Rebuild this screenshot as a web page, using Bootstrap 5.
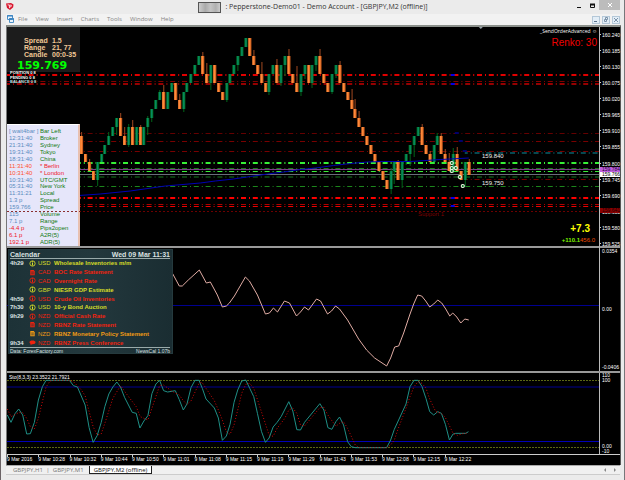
<!DOCTYPE html>
<html lang="en">

<head>
    <meta charset="utf-8">
    <meta name="viewport" content="width=device-width, initial-scale=1">
    <title>Pepperstone-Demo01 - Demo Account</title>
    <link href="https://cdn.jsdelivr.net/npm/bootstrap@5.3.1/dist/css/bootstrap.min.css" rel="stylesheet">
    <style>
        body { font-family: "Liberation Sans", Arial, sans-serif; font-size: 6px; line-height: 7px; background: #ebebeb; color: #333; }
        button { border: 0; padding: 0; background: none; font-size: inherit; line-height: inherit; color: inherit; }
        svg { display: block; }
        .win { min-height: 100vh; border-left: 1px solid #6b6366; border-right: 1px solid #77777a; padding: 0 4px 0 5px; }

        .title-row { height: 14px; font: 7px/14px "Open Sans", "Noto Sans", sans-serif; color: #333; }
        .title-side { width: 48px; }
        .acct-box { width: 23px; height: 11px; border: 1px solid #555; background: linear-gradient(90deg, #ccc, #aaa 30%, #c4c4c4 55%, #b0b0b0 80%, #ccc); }
        .close-btn { width: 21px; height: 10px; background: #bcbcbc; }

        .menu-row { height: 11px; background: #f2f2f2; font: 6px/11px "Open Sans", "Noto Sans", sans-serif; }
        .menu-row a { color: #858585; text-decoration: none; }
        .menu-links { gap: 8px; }
        .mdi-btns { gap: 2px; }
        .mdi-btn { width: 8px; height: 8px; border: 1px solid #b4c8d8; background: #e3eef7; }

        .chart { border-left: 1px solid #777; border-top: 2px solid #8b908b; background: #000; color: #fff; border-right: 1px solid #555; margin-right: -1px; }
        .pane { display: grid; grid-template-columns: minmax(0, 1fr) 21px; border-bottom: 2px solid #999; }
        .plot { position: relative; min-width: 0; }
        .plot svg.graph { width: 100%; }
        .pane-price .graph { height: 219px; }
        .pane-osc .graph { height: 123px; }
        .pane-sto { border-bottom: 1px solid #ccc; }
        .pane-sto .graph { height: 81px; }
        .graph polyline, .graph line { fill: none; vector-effect: non-scaling-stroke; }
        .axis { position: relative; border-left: 1px solid #bbb; font: 5px/7px "Liberation Sans Narrow", "Liberation Sans", sans-serif; padding: 0 0 0 2px; white-space: nowrap; }
        .axis-price { padding-top: 5px; margin-bottom: -2px; }
        .axis-price > span::before { content: ""; display: inline-block; width: 1px; height: 1px; margin: 0 1px 2px -2px; background: #ccc; }
        .price-tag { position: absolute; left: 0; right: 0; padding-left: 2px; height: 5px; line-height: 5px; }
        .pane-sto .axis { line-height: 5px; }
        .tag-ask { top: 140px; background: #c060e0; color: #200030; }
        .tag-bid { top: 145px; background: #fff; color: #000; }
        .tag-stop { top: 181px; background: #8b0000; color: #200; }
        .times { height: 10px; width: calc(100% - 21px); font: 5px/9px "Liberation Sans Narrow", "Liberation Sans", sans-serif; }
        .times span { flex: 0 0 5.28%; white-space: nowrap; background: linear-gradient(#ccc, #ccc) 0 0 / 1px 2px no-repeat; }

        .over { position: absolute; white-space: nowrap; }
        .info-box { left: 0; top: 0; width: 73px; height: 45px; background: #1c1c1c; color: #f2c896; padding: 10px 0 0 17px; font-weight: bold; font-size: 7px; }
        .info-box dl { display: grid; grid-template-columns: 28px 1fr; margin: 0; }
        .info-box dt, .info-box dd { margin: 0; line-height: 7px; font-weight: bold; }
        .big-price { font: bold 11px/16px "DejaVu Sans", sans-serif; color: #0f0; margin-left: -7px; }
        .stamp { left: 3px; font: bold 4px/4px "Liberation Sans", sans-serif; color: #fff; }
        .stamp-a { top: 44px; }
        .stamp-b { top: 49px; }
        .stamp-c { top: 53px; color: #bfe3e6; }
        .clock-box { left: 0; top: 97px; width: 73px; height: 122px; background: #e6e6fa; border-top: 1px solid #fff; border-right: 2px solid #e8c0b0; padding: 3px 0 0 2px; color: #5a8cc0; }
        .clock-box table { height: 117px; width: 100%; line-height: 6px; }
        .clock-box td { padding: 0; }
        .clock-box td:first-child { width: 31px; }
        .clock-box td:last-child { color: #107a10; }
        .clock-box tr.open td, .clock-box tr.neg td:first-child { color: #f01428; }
        .clock-box tr.open td:first-child { color: #ff5030; }
        .stop-line { left: 0; width: 73px; height: 1px; top: 184px; background: repeating-linear-gradient(90deg, #8b3030 0 2px, transparent 2px 4px); }
        .cal-box { left: 1px; top: 1px; width: 165px; height: 105px; background: linear-gradient(90deg, #1d3237, #23383d 50%, #1a2d32); border: 1px solid #253a3e; padding: 1px 2px 0 1px; font-weight: bold; color: #d9e0e0; }
        .cal-head { font-size: 7px; height: 8px; border-bottom: 1px solid #9aa; }
        .cal-box table { width: 100%; height: 88px; line-height: 8px; }
        .cal-box td { padding: 0; }
        .cal-box td:nth-child(1) { width: 19px; }
        .cal-box td:nth-child(2) { width: 9px; }
        .cal-box td:nth-child(3) { width: 16px; font-weight: normal; }
        .cal-box svg { width: 7px; height: 7px; }
        .cal-box .low { color: #d6dc28; }
        .cal-box .high { color: #f0230f; }
        .cal-box .mid { color: #f09a14; }
        .cal-box tr td:first-child { color: #d9e0e0; }
        .cal-foot { border-top: 1px solid #9aa; font-size: 5px; line-height: 6px; font-weight: normal; }
        .expert { right: 2px; top: 1px; font-family: "Open Sans", sans-serif; font-size: 5px; }
        .renko { right: 2px; top: 10px; font-size: 10px; line-height: 12px; color: #f00000; }
        .lvl { left: 475px; font-size: 6px; color: #eee; }
        .lvl-a { top: 126px; }
        .lvl-b { top: 153px; }
        .support { left: 411px; top: 184px; color: #7c0000; }
        .gain { right: 9px; top: 196px; font: bold 10px/12px "Liberation Sans", sans-serif; color: #ff0; }
        .pips { right: 4px; top: 210px; }
        .pips b { color: #7cf000; }
        .pips span { color: #f04a00; }
        .sto-name { left: 2px; top: 1px; font: 5px/7px "Liberation Sans", sans-serif; }

        .tab-row { height: 10px; background: #f0f0f0; border-top: 1px solid #aaa; border-bottom: 1px solid #ccc; color: #777; padding-left: 7px; font: 6px/8px "Open Sans", "Noto Sans", sans-serif; }
        .tab-row .tab-sep { width: 10px; text-align: center; }
        .tab-row .tab-on { background: #fff; color: #111; border: 1px solid #222; border-top: 0; padding: 0 4px; margin-left: 5px; }
    </style>
</head>

<body>
    <div class="win d-flex flex-column">
        <header class="title-row d-flex justify-content-between">
            <div class="title-side">
                <svg width="8" height="14" viewBox="0 0 8 14">
                    <path d="M0 3.6 5 3l2.5 1.5-.3 2.8L4 10 1 8z" fill="#d8142c" />
                    <path d="M1.6 4.8l1.7.2.2 3.2M3.3 5.2l2-.1-.2 1.6-1.5.3" fill="none" stroke="#fff" stroke-width=".8" />
                </svg>
            </div>
            <div class="d-flex align-items-center">
                <span class="acct-box me-1"></span>
                <span>: Pepperstone-Demo01 - Demo Account - [GBPJPY,M2 (offline)]</span>
            </div>
            <div class="title-side d-flex justify-content-end">
                <button aria-label="Minimize"><svg width="11" height="12"><path d="M0 6.5h4" stroke="#111" stroke-width="1" /></svg></button>
                <button aria-label="Maximize"><svg width="11" height="12"><path d="M2.5 3.5h4v3h-4z" fill="none" stroke="#111" /><path d="M2 3.5h5" stroke="#111" stroke-width="2" /></svg></button>
                <button class="close-btn d-flex justify-content-center align-items-center" aria-label="Close"><svg width="4" height="4"><path d="M0 0l4 4M4 0L0 4" stroke="#fff" /></svg></button>
            </div>
        </header>

        <nav class="menu-row d-flex align-items-center">
            <svg width="12" height="9" viewBox="0 0 12 9"><path d="M1.5.5h5v4h-5zM3.5 3.5h4v4h-4z" fill="#e9f3fb" stroke="#4b8ec4" /><path d="M1 1h6M3 4h5" stroke="#2f7cc0" /></svg>
            <div class="menu-links d-flex">
                <a href="#">File</a><a href="#">View</a><a href="#">Insert</a><a href="#">Charts</a><a href="#">Tools</a><a href="#">Window</a><a href="#">Help</a>
            </div>
            <div class="mdi-btns d-flex ms-auto">
                <button class="mdi-btn" aria-label="Minimize chart"><svg width="6" height="6"><path d="M1 4.5h3" stroke="#57718a" /></svg></button>
                <button class="mdi-btn" aria-label="Restore chart"><svg width="6" height="6"><path d="M2.5.5h2v2h-2zM1.5 2.5h2v2h-2z" fill="none" stroke="#7c93a8" /></svg></button>
                <button class="mdi-btn" aria-label="Close chart"><svg width="6" height="6"><path d="M1 1l4 4M5 1L1 5" stroke="#7c93a8" /></svg></button>
            </div>
        </nav>

        <main class="chart">
            <section class="pane pane-price">
                <div class="plot">
                    <svg class="graph" id="priceGraph" viewBox="7 27 591 219" preserveAspectRatio="none"></svg>
                    <div class="over info-box">
                        <dl>
                            <dt>Spread</dt><dd>1.5</dd>
                            <dt>Range</dt><dd>21, 77</dd>
                            <dt>Candle</dt><dd>00:0-35</dd>
                        </dl>
                        <div class="big-price">159.769</div>
                    </div>
                    <span class="over stamp stamp-a">POSITION 0 8</span>
                    <span class="over stamp stamp-b">PENDING 0 8</span>
                    <span class="over stamp stamp-c">BALANCE 0 8</span>
                    <div class="over clock-box">
                        <table>
                            <tr><td>[ wait4bar ]</td><td>Bar Left</td></tr>
                            <tr><td>12:31:40</td><td>Broker</td></tr>
                            <tr><td>21:31:40</td><td>Sydney</td></tr>
                            <tr><td>19:31:40</td><td>Tokyo</td></tr>
                            <tr><td>18:31:40</td><td>China</td></tr>
                            <tr class="open"><td>11:31:40</td><td>* Berlin</td></tr>
                            <tr class="open"><td>10:31:40</td><td>* London</td></tr>
                            <tr><td>10:31:40</td><td>UTC/GMT</td></tr>
                            <tr><td>05:31:40</td><td>New York</td></tr>
                            <tr><td>11:31:21</td><td>Local</td></tr>
                            <tr><td>1.3 p</td><td>Spread</td></tr>
                            <tr><td>159.766</td><td>Price</td></tr>
                            <tr><td>115</td><td>Volume</td></tr>
                            <tr><td>7.1 p</td><td>Range</td></tr>
                            <tr class="neg"><td>-4.4 p</td><td>Pips2open</td></tr>
                            <tr class="neg"><td>6.1 p</td><td>A2R(5)</td></tr>
                            <tr class="neg"><td>192.1 p</td><td>ADR(5)</td></tr>
                        </table>
                    </div>
                    <div class="over stop-line"></div>
                    <span class="over expert">_SendOrderAdvanced ☺</span>
                    <span class="over renko">Renko: 30</span>
                    <span class="over lvl lvl-a">159.840</span>
                    <span class="over lvl lvl-b">159.750</span>
                    <span class="over support">Support 1</span>
                    <span class="over gain">+7.3</span>
                    <span class="over pips"><b>+110.1</b><span>456.0</span></span>
                </div>
                <div class="axis axis-price d-flex flex-column justify-content-between">
                    <span>160.240</span><span>160.185</span><span>160.130</span><span>160.075</span><span>160.020</span><span>159.965</span><span>159.910</span>
                    <span>159.855</span><span>159.800</span><span>159.745</span><span>159.690</span><span>159.635</span><span>159.580</span><span>159.525</span>
                    <div class="price-tag tag-ask">159.784</div>
                    <div class="price-tag tag-bid">159.766</div>
                    <div class="price-tag tag-stop">159.641</div>
                </div>
            </section>

            <section class="pane pane-osc">
                <div class="plot">
                    <svg class="graph" viewBox="7 248 591 123" preserveAspectRatio="none">
                        <line x1="7" y1="305.5" x2="598" y2="305.5" stroke="#000090" />
                        <polyline stroke="#e0aca4" points="172,273 179,286 182,286 188,280 199,270 206,283 210,282 217,295 222,307 226,306 229,303 234,296 245,277 249,281 257,295 265,314 269,313 273,308 277,312 284,301 289,303 296,316 300,312 304,307 308,310 316,299 320,301 327,314 331,311 335,306 339,309 347,320 358,339 366,350 374,358 386,366 390,358 394,347 398,346 403,333 409,315 413,304 417,295 421,296 425,301 429,307 433,304 437,300 441,303 445,309 449,316 452,313 456,317 460,323 464,319 468,320" />
                    </svg>
                    <div class="over cal-box">
                        <div class="cal-head d-flex justify-content-between"><span>Calendar</span><span>Wed 09 Mar 11:31</span></div>
                        <table id="newsTable"></table>
                        <div class="cal-foot d-flex justify-content-between"><span>Data: ForexFactory.com</span><span>NewsCal 1.07b</span></div>
                    </div>
                </div>
                <div class="axis d-flex flex-column justify-content-between">
                    <span>0.0354</span><span>0.00</span><span>-0.0406</span>
                </div>
            </section>

            <section class="pane pane-sto">
                <div class="plot">
                    <!-- three units to a pixel -->
                    <svg class="graph" viewBox="21 24 1773 243" preserveAspectRatio="none">
                        <g stroke="#5c6814" stroke-dasharray="2 1">
                            <line x1="21" y1="46.5" x2="1794" y2="46.5" />
                            <line x1="21" y1="247.5" x2="1794" y2="247.5" />
                        </g>
                        <line x1="21" y1="66" x2="1794" y2="66" stroke="#000090" />
                        <line x1="21" y1="229.5" x2="1794" y2="229.5" stroke="#0000b8" />
                        <polyline stroke="#1f8f86" points="22,150 33,172 45,146 56,132 68,150 80,207 91,206 103,172 115,105 127,65 138,46 208,46 220,62 232,66 255,120 267,188 279,232 291,212 303,173 314,125 326,87 338,66 350,51 361,66 373,97 396,142 408,145 419,189 431,168 443,152 455,86 467,57 478,46 490,77 502,81 525,77 537,104 549,135 560,117 572,68 584,46 596,46 606,70 617,102 642,129 654,159 666,226 678,213 689,178 701,112 712,75 724,48 736,45 748,70 760,95 771,145 783,199 795,232 806,219 818,186 830,172 842,155 865,110 877,138 889,194 900,195 912,172 958,116 970,135 982,188 994,193 1006,170 1017,156 1029,180 1041,230 1052,245 1064,248 1158,248 1170,225 1181,193 1216,117 1228,65 1240,46 1252,46 1264,65 1276,101 1287,140 1299,150 1311,140 1322,145 1334,178 1346,225 1357,207 1365,205 1395,205 1403,200" />
                        <polyline stroke="#d00808" stroke-dasharray="1 2" points="22,132 33,155 56,143 68,143 80,160 91,185 103,192 115,160 127,110 138,66 150,48 162,46 208,46 220,50 243,74 255,92 267,140 279,185 291,210 303,207 314,175 338,100 361,62 385,95 408,125 420,155 443,165 455,130 478,62 490,60 514,78 537,90 549,107 560,118 572,108 596,55 605,52 617,70 642,107 654,135 666,165 678,200 689,208 701,180 712,135 724,85 736,58 748,55 760,70 783,140 806,210 818,214 830,190 853,160 865,135 877,129 889,145 900,180 912,183 958,128 970,127 982,150 1006,184 1017,175 1029,170 1041,190 1064,240 1075,248 1158,248 1170,240 1181,225 1193,190 1216,130 1228,95 1240,65 1252,50 1264,55 1276,70 1287,102 1305,140 1322,145 1334,158 1346,182 1357,205 1370,211 1385,206 1403,204" />
                    </svg>
                    <span class="over sto-name">Sto(8,3,3) 23.3522 21.7921</span>
                </div>
                <div class="axis d-flex flex-column justify-content-between">
                    <div class="d-flex flex-column"><span>110</span><span>100</span></div>
                    <div class="d-flex flex-column"><span>0.00</span><span>-10</span></div>
                </div>
            </section>

            <div class="times d-flex" id="timeAxis"></div>
        </main>

        <footer class="tab-row d-flex align-items-stretch">
            <button>GBPJPY,H1</button>
            <span class="tab-sep">|</span>
            <button>GBPJPY,M1</button>
            <button class="tab-on">GBPJPY,M2 (offline)</button>
            <div class="ms-auto d-flex">
                <button aria-label="Scroll left"><svg width="9" height="8"><path d="M4 2v4L2 4z" fill="#888" /></svg></button>
                <button aria-label="Scroll right"><svg width="9" height="8"><path d="M3 2v4l2-2z" fill="#888" /></svg></button>
            </div>
        </footer>
    </div>

    <script src="https://cdn.jsdelivr.net/npm/bootstrap@5.3.1/dist/js/bootstrap.bundle.min.js"></script>
    <script>
        const LEFT = 7, RIGHT = 598;

        // y, colour, thickness, first x
        const levels = [
            [75, '#e00000', 2], [81.5, '#800000', 1], [84, '#960000', 2],
            [133.5, '#640000', 1], [141.5, '#780000', 1], [151.5, '#780000', 1],
            [153, '#064850', 2, 464], [163, '#37f037', 2], [168.5, '#1c7c1c', 1],
            [171.5, '#37f037', 1], [177, '#0c3c10', 2], [179.5, '#780000', 1, 464],
            [186.5, '#1c861c', 1], [198, '#ff0000', 2], [204.5, '#b00000', 1], [206.5, '#f00000', 1]
        ];

        // direction, top level, height in bricks, wick above, wick below
        const candles = `o11.2,4 o13.1 o14.1,3 o15.1 g14.2,0,6 g13.1 g12.1 g11.1,4 g10.1 g9.1,0,8 o9.2,5 o11.1,9
            g10.2,3,2 o10.2,7 g10.2 o10.2,2 g10.2 g9.1,2,8 g8.1,0,4 g7.1 g6.1,2 o6.2,7 g6.2 g5.1 o5.2 o7.1,6
            g6.2,0,3 g5.1 g4.1 g3.1 g2.1 o2.2,4 o4.1,11 g3.2,0,7 o3.2 o5.1 o6.1 g5.2,0,2 g4.1 g3.1 g2.1,0,6 g1.1
            g0.1 o0.2 o2.1,6 o3.1 o4.1,12 o5.1 g4.2,0,3 g3.1 o3.2,6 g3.2,0,3 g2.1,0,11 o2.2,7 o4.1 o5.1,17 g4.2,0,4
            g3.1,0,5 o3.2 g3.2,0,5 g2.1,0,6 o2.2,7 o4.1 o5.1 g4.2,0,2 g3.1,0,4 o3.2,4 o5.1 o6.1 o7.1,11 o8.1,10
            o9.1,7 o10.1 o11.1 o12.1 o13.1 o14.1 o15.1 o16.1 g15.2,2,5 g14.1,0,13 o14.2,2 g14.2,0,8 g13.1,0,3
            g12.1,0,12 g11.1,0,12 g10.1 o10.2,3 o12.1 o13.1,3 g12.2 g11.1,3 o11.2,3 o13.1,5 o14.1,9 g13.2,6,2
            o13.2,7 o15.1 g14.2,0,7 o14.2,3`.trim().split(/\s+/);

        const maPoints = '79,195.5 100,194 130,191 165,186 200,183 215,181 233,179 250,176.5 267,174 283,172 300,169.5 315,168 333,165.5 350,163.5 367,162 383,161.5 410,161.5 440,159.5 468,158';

        function drawPrice() {
            let out = '';
            levels.forEach(([y, color, w, x = LEFT]) => {
                out += `<line x1="${x}" y1="${y}" x2="${RIGHT}" y2="${y}" stroke="${color}" stroke-width="${w}" stroke-dasharray="5 3 1 2.8" stroke-dashoffset="2" />`;
            });
            out += `<line x1="${LEFT}" y1="211.5" x2="${RIGHT}" y2="211.5" stroke="#6c0000" stroke-dasharray="2 2" />`;
            out += `<line x1="${LEFT}" y1="169.5" x2="${RIGHT}" y2="169.5" stroke="#7d3f8c" />`;
            out += `<line x1="${LEFT}" y1="174.5" x2="${RIGHT}" y2="174.5" stroke="#687078" />`;
            [[452, 75], [452, 84], [452, 198], [452, 206], [456, 133], [460, 141], [464, 151]].forEach(([x, y], i) => {
                out += `<line x1="${x - 2}" y1="${y}" x2="${x + 2}" y2="${y}" stroke="${i < 4 ? '#0000e6' : '#00006c'}" stroke-width="2" />`;
            });

            candles.forEach((item, i) => {
                const [, dir, top, size, up = 0, down = 0] = item.match(/([og])(\d+)\.(\d)(?:,(\d+))?(?:,(\d+))?/);
                const x = Math.round(81 + i * 3.906);
                const y1 = Math.round(38.3 + top * 8.87);
                const last = i === candles.length - 1;
                const y2 = last ? 175 : Math.round(38.3 + (+top + +size) * 8.87);
                const [body, edge, wick] = dir === 'o' ? ['#ff8a3a', '#c85a1c', '#a04820'] : ['#0a9078', '#007828', '#006418'];
                out += `<path d="M${x + .5} ${y1 - up}V${y2 + +down}" stroke="${wick}" />`;
                out += `<rect x="${x - 1}" y="${y1}" width="3" height="${y2 - y1}" fill="${edge}" />`;
                out += `<rect x="${x - (dir === 'o' ? 1 : 0)}" y="${y1}" width="${dir === 'o' ? 2 : 1}" height="${y2 - y1}" fill="${body}" />`;
            });

            out += `<polyline points="${maPoints}" stroke="#0000b4" />`;
            [[451, 163], [451, 168], [451, 171], [455, 168], [459, 177], [462, 186]].forEach(([x, y]) => {
                out += `<circle cx="${x}" cy="${y}" r="1.6" fill="#0a6a20" stroke="#f0ffe8" />`;
            });
            out += '<path d="M478 27h4l-2 2z" fill="#9aa4ac" />';
            document.getElementById('priceGraph').innerHTML = out;
        }

        const icons = {
            info: '<circle cx="4" cy="4" r="3" fill="none" stroke="currentColor"/><path d="M4 1.5v1M4 3.2v3" stroke="currentColor" stroke-width="1.2"/>',
            doc: '<path d="M1.5 1h4l1 1.5V7h-5z" fill="currentColor"/><path d="M2.5 3.5h3M2.5 5.5h3" stroke="#1d3237" stroke-width=".8"/>',
            talk: '<path d="M.5 3.5C.5 1 7.5 1 7.5 3.5S4.5 6 3.5 6L1.5 7.2 2 5.6C1 5.2.5 4.5.5 3.5z" fill="currentColor"/>'
        };

        const news = [
            ['4h29', 'info', 'low', 'USD', 'Wholesale Inventories m/m'],
            ['', 'doc', 'high', 'CAD', 'BOC Rate Statement'],
            ['', 'info', 'high', 'CAD', 'Overnight Rate'],
            ['', 'info', 'low', 'GBP', 'NIESR GDP Estimate'],
            ['4h59', 'info', 'high', 'USD', 'Crude Oil Inventories'],
            ['7h30', 'info', 'low', 'USD', '10-y Bond Auction'],
            ['9h29', 'info', 'high', 'NZD', 'Official Cash Rate'],
            ['', 'doc', 'high', 'NZD', 'RBNZ Rate Statement'],
            ['', 'doc', 'mid', 'NZD', 'RBNZ Monetary Policy Statement'],
            ['9h34', 'talk', 'high', 'NZD', 'RBNZ Press Conference']
        ];

        const times = ['2016', '10:28', '10:32', '10:44', '10:50', '11:01', '11:08', '11:15', '11:19', '11:29', '11:43', '11:53', '12:08', '12:15', '12:22'];

        drawPrice();
        document.getElementById('newsTable').innerHTML = news.map(([time, icon, level, cur, name]) =>
            `<tr class="${level}"><td>${time}</td><td><svg viewBox="0 0 8 8">${icons[icon]}</svg></td><td>${cur}</td><td>${name}</td></tr>`).join('');
        document.getElementById('timeAxis').innerHTML = times.map(t => `<span>9 Mar ${t}</span>`).join('');
    </script>
</body>

</html>
